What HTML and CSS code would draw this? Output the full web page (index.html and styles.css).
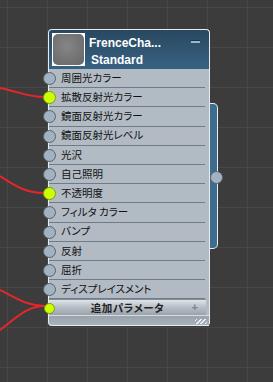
FILE: index.html
```html
<!DOCTYPE html>
<html lang="ja">
<head>
<meta charset="utf-8">
<link rel="stylesheet" href="styles.css">
</head>
<body>
<div class="canvas">
  <svg class="wires" width="273" height="382" viewBox="0 0 273 382">
    <g fill="none" stroke="#e8262a" stroke-width="2">
      <path d="M0 88 C 20 92, 28 97, 44 97"/>
      <path d="M0 176 C 18 188, 28 193, 44 193"/>
      <path d="M0 290 C 20 300, 28 306, 45 306"/>
      <path d="M0 330 C 18 316, 28 306, 45 306"/>
    </g>
  </svg>

  <div class="node">
    <div class="side-tab"><span class="socket out"></span></div>
    <div class="header">
      <div class="thumb"><div class="thumb-inner"></div></div>
      <div class="titles">
        <div class="title">FrenceCha...</div>
        <div class="subtitle">Standard</div>
      </div>
      <div class="minimize"></div>
    </div>
    <div class="body">
      <div class="row"><span class="socket"></span><span class="label">周囲光カラー</span></div>
      <div class="row"><span class="socket on"></span><span class="label">拡散反射光カラー</span></div>
      <div class="row"><span class="socket"></span><span class="label">鏡面反射光カラー</span></div>
      <div class="row"><span class="socket"></span><span class="label">鏡面反射光レベル</span></div>
      <div class="row"><span class="socket"></span><span class="label">光沢</span></div>
      <div class="row"><span class="socket"></span><span class="label">自己照明</span></div>
      <div class="row"><span class="socket on"></span><span class="label">不透明度</span></div>
      <div class="row"><span class="socket"></span><span class="label">フィルタ カラー</span></div>
      <div class="row"><span class="socket"></span><span class="label">バンプ</span></div>
      <div class="row"><span class="socket"></span><span class="label">反射</span></div>
      <div class="row"><span class="socket"></span><span class="label">屈折</span></div>
      <div class="row"><span class="socket"></span><span class="label">ディスプレイスメント</span></div>
      <div class="extra"><span class="socket small on"></span><span class="extra-label">追加パラメータ</span><span class="plus">+</span></div>
      <div class="footer"><span class="grip"></span></div>
    </div>
  </div>
</div>
</body>
</html>
```
FILE: styles.css
```css
html, body {
  margin: 0;
  padding: 0;
  background: #3c3c3c;
}
.canvas {
  position: relative;
  width: 273px;
  height: 382px;
  overflow: hidden;
  background-color: #3c3c3c;
  background-image:
    linear-gradient(to right, #474747 1px, transparent 1px),
    linear-gradient(to bottom, #474747 1px, transparent 1px);
  background-size: 40px 40px;
  background-position: 7px 7px;
}
.wires {
  position: absolute;
  left: 0;
  top: 0;
}
.node {
  position: absolute;
  left: 48px;
  top: 29px;
  width: 162px;
  font-family: "Noto Sans CJK JP", "Liberation Sans", sans-serif;
}
.side-tab {
  position: absolute;
  left: 160px;
  top: 74px;
  width: 9px;
  height: 144px;
  background: #3e6c8f;
  border: 1px solid #e8eef2;
  border-left: none;
  border-radius: 0 5px 5px 0;
}
.header {
  border: 1px solid #e6ecf0;
  border-bottom: none;
  border-radius: 4px 4px 0 0;
  background: linear-gradient(to bottom, #294860, #386282);
  display: flex;
  align-items: flex-start;
  padding: 3px 0 0 3px;
  box-sizing: border-box;
  height: 40px;
  position: relative;
}
.thumb {
  width: 33px;
  height: 33px;
  background: #ffffff;
  box-sizing: border-box;
  padding: 1px;
}
.thumb-inner {
  width: 100%;
  height: 100%;
  border-radius: 5px;
  background: radial-gradient(circle at 45% 40%, #868686, #6f6f6f 70%, #666 100%);
}
.titles {
  margin-left: 4px;
  font-family: "Liberation Sans", Arial, sans-serif;
  font-weight: bold;
  font-size: 12px;
  color: #ffffff;
  line-height: 17px;
  margin-top: 2px;
}
.subtitle {
  margin-left: 2px;
}
.minimize {
  position: absolute;
  right: 9px;
  top: 10px;
  width: 9px;
  height: 2px;
  border-top: 1px solid #1e3547;
  background: #9ab6cc;
}
.body {
  background: #b2bbc4;
  border-left: 1px solid #e6ecf0;
  border-right: 1px solid #e6ecf0;
  border-radius: 0 0 4px 4px;
  position: relative;
}
.row {
  position: relative;
  height: 19.2px;
  display: flex;
  align-items: center;
  box-sizing: border-box;
  border-bottom: 1px solid #6f7b86;
  margin-right: 4px;
}
.label {
  font-size: 10.5px;
  color: #111;
  padding-left: 12px;
  font-feature-settings: "palt";
  line-height: 1;
  letter-spacing: 0;
}
.socket {
  position: absolute;
  left: -6px;
  top: 3px;
  width: 11px;
  height: 11px;
  border-radius: 50%;
  background: #a3b2c1;
  border: 1px solid #56626e;
}
.socket.on {
  background: #ccff00;
  border-color: #7f9a12;
}
.socket.small {
  width: 9px;
  height: 9px;
  top: 3px;
  left: -5px;
}
.socket.out {
  left: 2px;
  top: 67px;
}
.extra {
  position: relative;
  height: 15px;
  margin-right: 3px;
  display: flex;
  align-items: center;
  justify-content: center;
  background: linear-gradient(to bottom, #dfe4e8, #b9c0c7 45%, #9aa3ab);
  border-top: 1px solid #858f98;
}
.extra-label {
  font-weight: bold;
  font-size: 10.5px;
  color: #222;
  font-feature-settings: "palt";
  letter-spacing: 0.5px;
  line-height: 1;
}
.plus {
  position: absolute;
  right: 8px;
  top: 0;
  font-family: "Liberation Sans", Arial, sans-serif;
  font-weight: bold;
  font-size: 11px;
  color: #7d868f;
  line-height: 15px;
}
.footer {
  height: 9px;
  background: linear-gradient(to bottom, #9aa3ac, #a9b1b9);
  border-top: 1px solid #d5dbe0;
  border-bottom: 1px solid #e6ecf0;
  border-radius: 0 0 0 4px;
  position: relative;
}
.grip {
  position: absolute;
  right: 2px;
  bottom: 1px;
  width: 12px;
  height: 5px;
  background: repeating-linear-gradient(135deg, transparent 0 1px, #eef1f4 1px 2px, transparent 2px 3px);
}
```
